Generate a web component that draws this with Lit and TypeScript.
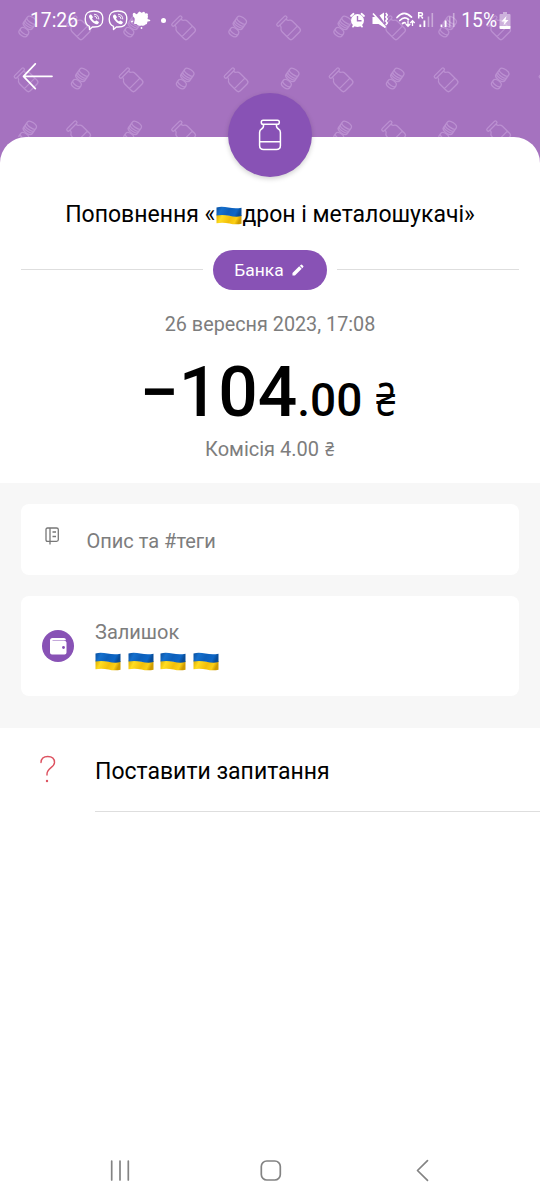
import { LitElement, html, svg, css } from "lit";
import { customElement } from "lit/decorators.js";

const flag = (cls = "flag") => html`<svg class=${cls} viewBox="0 0 26 18" role="img" aria-label="Прапор України">
  <defs>
    <linearGradient id="blue" x1="0" x2="1" y1="0" y2="0.2">
      <stop offset="0" stop-color="#0a4f9e" /><stop offset="0.25" stop-color="#1670cc" />
      <stop offset="0.55" stop-color="#0c5fbb" /><stop offset="0.85" stop-color="#0d66c6" /><stop offset="1" stop-color="#084c98" />
    </linearGradient>
    <linearGradient id="gold" x1="0" x2="1" y1="0" y2="0.2">
      <stop offset="0" stop-color="#d9a800" /><stop offset="0.25" stop-color="#ffdd22" />
      <stop offset="0.6" stop-color="#f2bf0a" /><stop offset="0.85" stop-color="#fbcf14" /><stop offset="1" stop-color="#cf9c00" />
    </linearGradient>
  </defs>
  <path fill="url(#gold)" d="M.5 8C8 6.500 13 11 25.500 8.500V17.300C16 19.500 11 14.500.5 16.800Z" />
  <path fill="url(#blue)" d="M.5 1C9-1.500 15 3.400 25.500 1.200V9.600C16 11.800 11 6.800.5 9Z" />
</svg>`;

const jar = (x: number, y: number) => svg`<g transform="translate(${x} ${y}) rotate(-45) scale(.87)">
  <rect x="-7.500" y="-13" width="15" height="3.400" rx="1.600" />
  <path d="M-5-9.600V-8.500Q-5-7-6.700-6Q-8.500-5-8.500-2.500V9Q-8.500 12-5.500 12H5.500Q8.500 12 8.500 9V-2.500Q8.500-5 6.700-6Q5-7 5-8.500V-9.600M-8.500 5.500H8.500" />
</g>`;

const coins = (x: number, y: number) => svg`<g transform="translate(${x} ${y}) rotate(35) scale(.86)">
  <path d="M-6.200-9C-6.200-13.500 6.200-13.500 6.200-9V-1C6.200 3-6.200 3-6.200-1ZM-6.200-8.500C-6.200-5 6.200-5 6.200-8.500M-6.200-5.500C-6.200-2 6.200-2 6.200-5.500M-6.200-3C-6.200.5 6.200.5 6.200-3" />
  <path d="M-5 6.500C-5 1.800 6 1.800 6 6.500V9C6 13.500-5 13.500-5 9ZM-5 6.500C-5 10 6 10 6 6.500" />
</g>`;

const tiles = [0, 1, 2].flatMap((row) =>
  Array.from({ length: 11 }, (_, col) => {
    const x = 27 + col * 52.500;
    const y = [28, 80, 133][row];
    return (row + col) % 2 ? jar(x - 0.700, y) : coins(x + 0.300, y - 1.500);
  })
);

const viber = html`<svg class="viber" viewBox="0 0 20 21" fill="none" stroke="#fff" stroke-width="1.350" stroke-linecap="round" stroke-linejoin="round">
  <path d="M10 1C4 1 1.200 2.800 1.200 9C1.200 13 2.500 15.300 5.500 16.300V19.600L8.400 17H10C16 17 18.800 15.200 18.800 9C18.800 2.800 16 1 10 1Z" />
  <path fill="#fff" stroke="none" d="M6.100 4.400L7.400 4.700L8.900 6.900Q9 7.600 8 8.300Q8.700 10.700 11 11.600Q11.900 10.300 12.600 10.500L14.900 12Q15.200 13 13.600 14.200Q12.800 14.700 11 13.700Q6.500 11.300 5 7Q4.600 5.400 6.100 4.400Z" />
  <path stroke-width=".9" d="M10.400 4.300Q14.700 4.600 14.800 9M10.700 6.100Q13 6.400 13.100 8.700" />
</svg>`;

@customElement("app-root")
export class AppRoot extends LitElement {
  static styles = css`
    :host { display: block; font-family: Roboto, "Noto Sans", sans-serif; color: #000; }
    * { box-sizing: border-box; }
    svg { display: block; flex: none; }
    .page { display: grid; height: 1200px; width: 100%; overflow: hidden; background: #fff; }
    .hero { grid-area: 1 / 1; height: 165px; background: #a572bf; overflow: hidden; }
    .hero svg { width: 540px; height: 137px; fill: none; stroke: #bb90d1; stroke-width: 1.500; }
    .content { grid-area: 1 / 1; display: flex; flex-direction: column; min-width: 0; z-index: 1; }
    .status { height: 41px; padding: 0 29px 0 30px; display: flex; align-items: center; color: #fff; font-size: 19.300px; line-height: 24px; }
    .clock { width: 54px; }
    .viber { width: 20px; height: 21px; margin-right: 3.500px; }
    .splat { width: 20px; height: 18px; margin-top: -2px; }
    .dot { width: 5px; height: 5px; margin-left: 10px; border-radius: 50%; background: #fff; }
    .right { margin-left: auto; display: flex; align-items: center; }
    .tray { width: 112px; height: 24px; margin-top: -1px; }
    .battery { width: 12px; height: 18px; margin-left: 2px; }
    .bar { height: 96px; padding: 22px 0 0 22px; }
    .bar svg { width: 32px; height: 28px; fill: none; stroke: #fff; stroke-width: 1.700; stroke-linecap: round; stroke-linejoin: round; }
    .sheet { flex: 1; background: #fff; border-radius: 26px 26px 0 0; display: flex; flex-direction: column; }
    .badge { width: 84px; height: 84px; margin: -44.500px auto 0; border-radius: 50%; background: #8852b5; display: grid; place-items: center; box-shadow: 0 2px 5px rgba(0, 0, 0, .18); }
    .badge svg { width: 26px; height: 34px; fill: none; stroke: #fff; stroke-width: 1.500; }
    .title { margin: 22.500px 0 0; height: 32px; display: flex; align-items: center; justify-content: center; font-size: 23px; font-weight: 400; line-height: 32px; white-space: pre; }
    .flag { width: 26px; height: 19px; }
    .title .flag { width: 26px; margin: 1px 0 0 1px; }
    .category { margin-top: 18px; padding: 0 21px; height: 41px; display: flex; align-items: center; gap: 10px; }
    .rule { flex: 1; height: 1px; background: #dedede; }
    .chip { width: 114px; height: 40px; border-radius: 20px; background: #8852b5; color: #fff; display: flex; align-items: center; justify-content: center; gap: 8px; padding-right: 2px; font-size: 17.400px; }
    .chip svg { width: 12px; height: 12px; }
    .date { margin-top: 23px; text-align: center; font-size: 19.800px; line-height: 24px; color: #7d7d7d; }
    .amount { height: 84px; margin-top: 13px; padding-right: 2px; display: flex; align-items: baseline; justify-content: center; font-weight: 500; line-height: 86px; white-space: pre; }
    .whole { font-size: 69.500px; }
    .cents { font-size: 46px; }
    .currency { width: 22px; margin-left: 14px; font-size: 46px; font-weight: 400; }
    .currency span { display: inline-block; transform: scaleX(.76); transform-origin: left; }
    .fee { margin-top: 3px; text-align: center; font-size: 20px; line-height: 24px; color: #7d7d7d; }
    .fee small { display: inline-block; font-size: 20px; transform: scaleX(.8); transform-origin: 60%; }
    .details { margin-top: 22px; height: 245px; padding: 21px; background: #f7f7f7; display: flex; flex-direction: column; gap: 21px; }
    .card { background: #fff; border-radius: 8px; display: flex; }
    .note { height: 71px; padding: 2px 21px 0; align-items: center; font-size: 20px; color: #7d7d7d; }
    .note svg { width: 20px; height: 22px; margin: -9px 24.500px 0 0; fill: none; stroke: #777; stroke-width: 1.300; }
    .balance { height: 100px; padding: 0 21px; align-items: center; gap: 21px; }
    .wallet { width: 32px; height: 32px; }
    .label { margin-top: -2px; font-size: 20px; line-height: 24px; color: #7d7d7d; }
    .flags { display: flex; gap: 6.500px; margin-top: 8px; }
    .help { height: 84px; display: flex; }
    .help svg { width: 16px; height: 28px; margin: 27px 39px 0 40px; }
    .ask { flex: 1; border-bottom: 1px solid #dedede; font-size: 23px; line-height: 87px; }
    .nav { margin-top: auto; height: 60px; display: flex; justify-content: space-between; align-items: center; padding: 0 108px; }
    .nav svg { width: 24px; height: 24px; fill: none; stroke: #838383; stroke-width: 1.700; stroke-linecap: round; stroke-linejoin: round; }
  `;

  render() {
    return html`<main class="page">
      <div class="hero"><svg viewBox="0 0 540 137">${tiles}</svg></div>
      <div class="content">
        <div class="status">
          <span class="clock">17:26</span>${viber}${viber}
          <svg class="splat" viewBox="0 0 20 18" fill="#fff">
            <path d="M2 2.500Q3 1 5 3Q6 3.500 7 2Q8-.5 9.500 1Q10.500 2.500 12 1Q14 0 14 2.500Q16 2 17 3Q16.500 4.500 17 5.500L16.500 8Q19.500 8.500 19.500 9.500Q19 10.500 16.500 10.500Q16.500 13 14.500 13.500Q12.500 15.500 10.500 14.500Q7 15.500 5.500 13Q2.500 13.500 3.200 11.500Q4 9 3.500 7Q1 5 2 2.500Z" />
            <circle cx="1" cy="10.500" r="1" /><circle cx="10.500" cy="17" r=".9" />
          </svg>
          <i class="dot"></i>
          <div class="right">
            <svg class="tray" viewBox="348 8 112 24" fill="none" stroke="#fff">
              <circle cx="356.500" cy="20.500" r="6.500" fill="#fff" stroke="none" />
              <path stroke-width="1.800" stroke-linecap="round" d="M350 16L352.500 13.800M363 16L360.500 13.800M352 26.500L353 25.500M361 26.500L360 25.500" />
              <path stroke="#a572bf" stroke-width="1.400" d="M356.500 16V20.800H360.500" />
              <path fill="#fff" stroke="none" d="M371.500 17H374.500L384 26.500V28L377.500 24H371.500ZM378.500 15.500L383 12.500V22Z" />
              <path stroke-width="1.700" d="M372 13.500L384.500 27.500" />
              <path stroke-width="1.500" d="M384.800 13L386.300 15L384.800 17L386.300 19L384.800 21L386.300 23L384.800 25" />
              <path stroke-width="1.700" stroke-linecap="round" d="M396 17.500Q403 9.500 410.500 17.200M398.800 20.500Q403.500 16 407.500 19.500" />
              <path stroke-width="1.700" stroke-linecap="round" d="M401.500 23.500Q403.300 22 404.300 23" />
              <path stroke-width="1.300" d="M407 20.500V26M404.800 24L407 26.300L409.200 24M411.500 26V20.500M409.300 23L411.500 20.700L413.700 23" />
              <path stroke-width="1.500" d="M417.700 18.500V12.700H420Q421.500 12.700 421.500 14.300Q421.500 15.700 420 15.700H417.700M420 15.700L421.800 18.500" />
              <path stroke-width="1.800" d="M419.300 24.500V27M423.400 20.500V27M440.500 24.500V27M444.600 20.500V27" />
              <path stroke-width="1.600" opacity=".4" d="M427.500 16.500V27M431.300 13V27M448.700 16.500V27M452.700 13V27" />
            </svg>
            <span>15%</span>
            <svg class="battery" viewBox="0 0 12 18">
              <path fill="#fff" opacity=".45" d="M4 0H8V2H10.500Q11.500 2 11.500 3V14H.5V3Q.5 2 1.500 2H4Z" />
              <path fill="#fff" d="M.5 14H11.500V16Q11.500 17 10.500 17H1.500Q.5 17 .5 16Z" />
              <path fill="#fff" d="M7.500 4L2.500 9.500H5.500L4.500 13.500L9.500 8H6.500Z" />
            </svg>
          </div>
        </div>
        <div class="bar"><svg viewBox="0 0 32 28"><path d="M30 13.300H1.800M13.300.8L1.500 13.300L13.300 25.600" /></svg></div>
        <section class="sheet">
          <div class="badge"><svg viewBox="0 0 26 34">
            <rect x="4.300" y="2.300" width="18" height="4" rx="1.800" />
            <path d="M6.500 6.300Q7 9.500 4.500 11Q2.600 12 2.600 14.500V27.500Q2.600 31.500 6.600 31.500H19.400Q23.400 31.500 23.400 27.500V14.500Q23.400 12 21.500 11Q19 9.500 19.500 6.300M2.600 23.800H23.400" />
          </svg></div>
          <h1 class="title"><span>Поповнення «</span>${flag()}<span>дрон і металошукачі»</span></h1>
          <div class="category">
            <i class="rule"></i>
            <div class="chip"><span>Банка</span><svg viewBox="0 0 13 13" fill="#fff"><path d="M.5 9.800L7.800 2.500L10.500 5.200L3.200 12.500H.5ZM8.500 1.800L9.800.7Q10.300.3 10.800.8L12.200 2.200Q12.700 2.700 12.200 3.200L11.200 4.500Z" /></svg></div>
            <i class="rule"></i>
          </div>
          <div class="date">26 вересня 2023, 17:08</div>
          <div class="amount"><span class="whole">−104</span><span class="cents">.00</span><span class="currency"><span>₴</span></span></div>
          <div class="fee">Комісія 4.00 <small>₴</small></div>
          <div class="details">
            <div class="card note"><svg viewBox="0 0 20 22">
              <path d="M5.500 3H14.500Q16.300 3 16.300 4.500V14.800Q16.300 16.300 14.500 16.300H5.500Q4 16.300 4 14.800V4.500Q4 3 5.500 3ZM8 3V19.500M10.500 7H14M10.500 11.500H14" />
            </svg><span>Опис та #теги</span></div>
            <div class="card balance">
              <svg class="wallet" viewBox="0 0 32 32"><circle cx="16" cy="16" r="16" fill="#8852b5" />
                <path fill="#fff" d="M10.500 8H22Q23.800 8 23.800 9.500V10.200H10.500V10.800H22Q24.500 10.800 24.500 12.500V22.500Q24.500 24.500 22.500 24.500H10Q8 24.500 8 22.500V10.500Q8 8 10.500 8Z" />
                <circle cx="21.500" cy="17.500" r="1.400" fill="#8852b5" /></svg>
              <div><div class="label">Залишок</div><div class="flags">${[0, 1, 2, 3].map(() => flag())}</div></div>
            </div>
          </div>
          <div class="help">
            <svg viewBox="0 0 16 28" fill="none" stroke="#dd5260" stroke-width="1.400" stroke-linecap="round"><path d="M1 7.500Q1.300 1.500 7.700 1.500Q14.500 1.500 14.500 7.500C14.500 12.500 7 13 7 19V20" /><circle cx="7" cy="26" r="1.200" fill="#dd5260" stroke="none" /></svg>
            <div class="ask">Поставити запитання</div>
          </div>
          <div class="nav">
            <svg viewBox="0 0 24 24"><path d="M3.700 3V22M12 3V22M20.300 3V22" /></svg>
            <svg viewBox="0 0 24 24"><rect x="3.300" y="3" width="19" height="19" rx="5.500" /></svg>
            <svg viewBox="0 0 24 24"><path d="M19.500 2.700L9.500 12.500L19.500 22.300" /></svg>
          </div>
        </section>
      </div>
    </main>`;
  }
}
